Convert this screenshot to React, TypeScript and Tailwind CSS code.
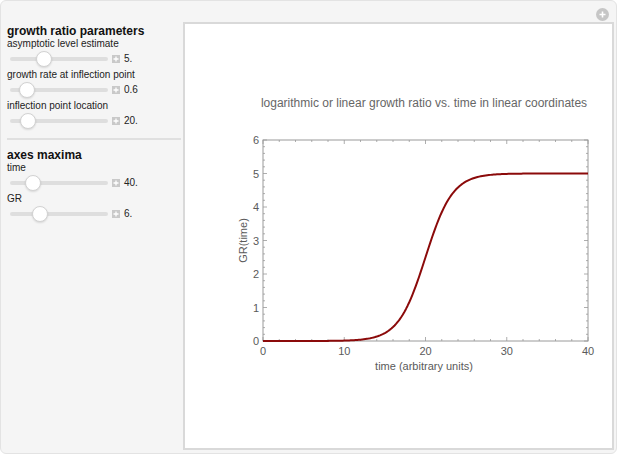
import React from "react";

const font = { fontFamily: '"Liberation Sans", Arial, sans-serif' };

function Slider({ thumb, value }: { thumb: number; value: string }) {
  return (
    <div className="relative h-[15px]">
      <div className="absolute left-[9px] w-[98px] h-[4px] rounded-full bg-[#dedede] top-[6px]" />
      <div
        className="absolute top-[0px] w-[16px] h-[16px] rounded-full bg-white border border-[#d2d2d2] shadow-[0_1px_2px_rgba(0,0,0,0.12)]"
        style={{ left: thumb - 9 }}
      />
      <div className="absolute left-[111px] top-[4px] w-[8px] h-[8px] bg-[#c9c9c9] flex items-center justify-center">
        <svg width="8" height="8" viewBox="0 0 8 8">
          <path d="M4 1.5v5M1.5 4h5" stroke="#fff" strokeWidth="1.3" />
        </svg>
      </div>
      <div className="absolute left-[123px] top-[1px] text-[10px] leading-[14px] text-[#222]">{value}</div>
    </div>
  );
}

function Label({ children }: { children: React.ReactNode }) {
  return <div className="h-[16px] text-[10px] leading-[18px] text-[#222] pl-[6px]">{children}</div>;
}

function Title({ children }: { children: React.ReactNode }) {
  return <div className="h-[11px] pl-[6px] text-[12px] leading-[14px] font-bold text-[#111] whitespace-nowrap">{children}</div>;
}

function Chart() {
  const L = 78, R = 403, T = 116, B = 317;
  const sx = (t: number) => L + (t / 40) * (R - L);
  const sy = (v: number) => B - (v / 6) * (B - T);
  const pts: string[] = [];
  for (let t = 0; t <= 40.001; t += 0.2) {
    const v = 5 / (1 + Math.exp(-0.6 * (t - 20)));
    pts.push(`${sx(t).toFixed(2)},${sy(v).toFixed(2)}`);
  }
  const ticks: React.ReactNode[] = [];
  for (let i = 0; i <= 30; i++) {
    const v = i * 0.2;
    const y = sy(v);
    const major = i % 5 === 0;
    const len = major ? 4 : 2;
    ticks.push(<line key={`yl${i}`} x1={L} x2={L + len} y1={y} y2={y} stroke="#999" strokeWidth="0.8" />);
    ticks.push(<line key={`yr${i}`} x1={R} x2={R - len} y1={y} y2={y} stroke="#999" strokeWidth="0.8" />);
  }
  for (let i = 0; i <= 20; i++) {
    const t = i * 2;
    const x = sx(t);
    const major = i % 5 === 0;
    const len = major ? 4 : 2;
    ticks.push(<line key={`xb${i}`} x1={x} x2={x} y1={B} y2={B - len} stroke="#999" strokeWidth="0.8" />);
    ticks.push(<line key={`xt${i}`} x1={x} x2={x} y1={T} y2={T + len} stroke="#999" strokeWidth="0.8" />);
  }
  return (
    <svg width="427" height="424" viewBox="0 0 427 424" style={font}>
      <text x="239" y="83" textAnchor="middle" fontSize="12" fill="#666">
        logarithmic or linear growth ratio vs. time in linear coordinates
      </text>
      <rect x={L} y={T} width={R - L} height={B - T} fill="none" stroke="#9a9a9a" strokeWidth="1" />
      {ticks}
      {[0, 1, 2, 3, 4, 5, 6].map((v) => (
        <text key={v} x={L - 4} y={sy(v) + 4} textAnchor="end" fontSize="11" fill="#5a5a5a">
          {v}
        </text>
      ))}
      {[0, 10, 20, 30, 40].map((t) => (
        <text key={t} x={sx(t)} y={B + 14} textAnchor="middle" fontSize="11" fill="#5a5a5a">
          {t}
        </text>
      ))}
      <text x="239" y={B + 29} textAnchor="middle" fontSize="11" fill="#5a5a5a">
        time (arbitrary units)
      </text>
      <text x="0" y="0" textAnchor="middle" fontSize="11" fill="#5a5a5a" transform={`translate(62 ${(T + B) / 2}) rotate(-90)`}>
        GR(time)
      </text>
      <polyline points={pts.join(" ")} fill="none" stroke="#8b0a0a" strokeWidth="2" strokeLinejoin="round" />
    </svg>
  );
}

export default function App() {
  return (
    <div className="w-[620px] h-[456px] bg-white" style={font}>
      <div className="relative w-[617px] h-[454px] bg-[#f5f5f5] border border-[#e3e3e3] rounded-[6px] flex">
        <div className="w-[182px] shrink-0 pt-[23px]">
          <Title>growth ratio parameters</Title>
          <Label>asymptotic level estimate</Label>
          <Slider thumb={44} value="5." />
          <Label>growth rate at inflection point</Label>
          <Slider thumb={27} value="0.6" />
          <Label>inflection point location</Label>
          <Slider thumb={28} value="20." />
          <div className="ml-[6px] mr-[2px] mt-[10px] h-[2px] bg-[#e0e0e0]" />
          <div className="mt-[8px]">
            <Title>axes maxima</Title>
          </div>
          <Label>time</Label>
          <Slider thumb={33} value="40." />
          <Label>GR</Label>
          <Slider thumb={40} value="6." />
        </div>
        <div className="mt-[21px] mb-[4px] w-[431px] h-[428px] bg-white border-2 border-[#d9d9d9]">
          <Chart />
        </div>
        <div className="absolute right-[7px] top-[7px] w-[13px] h-[13px] rounded-full bg-[#c6c6c6] flex items-center justify-center">
          <svg width="9" height="9" viewBox="0 0 9 9">
            <path d="M4.5 1.5v6M1.5 4.5h6" stroke="#fff" strokeWidth="1.6" />
          </svg>
        </div>
      </div>
    </div>
  );
}
